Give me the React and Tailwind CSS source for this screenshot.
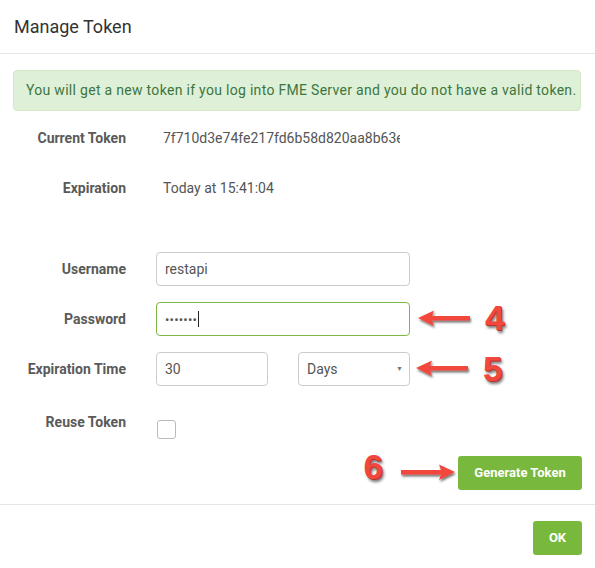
import React from "react";

function LeftArrow() {
  return (
    <svg width="58" height="22" viewBox="0 0 58 22" className="overflow-visible">
      <defs>
        <filter id="sh" x="-20%" y="-40%" width="140%" height="180%">
          <feDropShadow dx="1" dy="2" stdDeviation="1" floodColor="#000" floodOpacity="0.55" />
        </filter>
      </defs>
      <path d="M1 10 L17 2.5 L15 8 L53 8 L53 12.5 L15 12.5 L17 18 Z" fill="#f2473c" filter="url(#sh)" />
    </svg>
  );
}

function RightArrow() {
  return (
    <svg width="58" height="22" viewBox="0 0 58 22" className="overflow-visible">
      <defs>
        <filter id="sh2" x="-20%" y="-40%" width="140%" height="180%">
          <feDropShadow dx="1" dy="2" stdDeviation="1" floodColor="#000" floodOpacity="0.55" />
        </filter>
      </defs>
      <path d="M56 10 L40 2.5 L42 8 L2 8 L2 12.5 L42 12.5 L40 18 Z" fill="#f2473c" filter="url(#sh2)" />
    </svg>
  );
}

function Num({ children }) {
  return (
    <span className="font-black text-[35px] leading-none text-[#f2473c] [font-family:'Liberation_Sans',Arial,sans-serif] [text-shadow:1px_1px_0_#b8322b,2px_3px_3px_rgba(0,0,0,0.55)]">
      {children}
    </span>
  );
}

function Label({ children }) {
  return (
    <div className="w-[126px] shrink-0 text-right text-[14px] leading-[20px] font-bold text-[#5a5a5a]">{children}</div>
  );
}

export default function App() {
  return (
    <div className="w-[595px] h-[568px] bg-white overflow-hidden [font-family:Roboto,'Liberation_Sans',sans-serif]">
      <div className="h-[54px] border-b border-[#e5e5e5] px-[14px] flex items-center">
        <h4 className="text-[18px] text-[#333] font-normal">Manage Token</h4>
      </div>

      <div className="pt-[16px] pb-[14px] border-b border-[#e5e5e5]">
        <div className="ml-[13px] mr-[14px] h-[41px] rounded-[4px] bg-[#dff0d8] border border-[#d6e9c6] px-[12px] flex items-center text-[14px] tracking-[0.3px] whitespace-nowrap text-[#3c763d]">
          You will get a new token if you log into FME Server and you do not have a valid token.
        </div>

        <div className="mt-[10px] h-[34px] flex items-center">
          <Label>Current Token</Label>
          <div className="ml-[37px] w-[237px] overflow-hidden whitespace-nowrap text-[14px] text-[#555]">
            7f710d3e74fe217fd6b58d820aa8b63e
          </div>
        </div>

        <div className="mt-[16px] h-[34px] flex items-center">
          <Label>Expiration</Label>
          <div className="ml-[37px] text-[14px] text-[#555]">Today at 15:41:04</div>
        </div>

        <div className="mt-[47px] h-[34px] flex items-center">
          <Label>Username</Label>
          <div className="ml-[30px] w-[254px] h-[34px] rounded-[4px] border border-[#ccc] px-[8px] flex items-center text-[14px] text-[#555]">
            restapi
          </div>
        </div>

        <div className="mt-[16px] h-[34px] flex items-center">
          <Label>Password</Label>
          <div className="ml-[30px] w-[254px] h-[34px] rounded-[4px] border border-[#7db744] px-[8px] flex items-center text-[#555]">
            <span className="text-[13px] tracking-[0.2px] leading-none">•••••••</span>
            <span className="ml-[1px] w-[1px] h-[16px] bg-[#222]"></span>
          </div>
          <div className="ml-[7px] flex items-center">
            <LeftArrow />
            <span className="ml-[10px] -mt-[2px]"><Num>4</Num></span>
          </div>
        </div>

        <div className="mt-[16px] h-[34px] flex items-center">
          <Label>Expiration Time</Label>
          <div className="ml-[30px] w-[112px] h-[34px] rounded-[4px] border border-[#ccc] px-[8px] flex items-center text-[14px] text-[#555]">
            30
          </div>
          <div className="ml-[30px] w-[112px] h-[34px] rounded-[4px] border border-[#ccc] pl-[8px] pr-[6px] flex items-center justify-between text-[14px] text-[#555]">
            <span>Days</span>
            <span className="text-[7px] text-[#777]">▼</span>
          </div>
          <div className="ml-[5px] flex items-center">
            <LeftArrow />
            <span className="ml-[10px]"><Num>5</Num></span>
          </div>
        </div>

        <div className="mt-[16px] h-[54px] flex items-start">
          <div className="pt-[10px]">
            <Label>Reuse Token</Label>
          </div>
          <div className="ml-[31px] mt-[18px] w-[19px] h-[19px] rounded-[3px] border border-[#bbb] bg-white"></div>
        </div>

        <div className="flex items-center justify-end pr-[13px]">
          <span className="-mt-[12px]"><Num>6</Num></span>
          <span className="ml-[16px]"><RightArrow /></span>
          <button className="ml-[1px] w-[124px] h-[34px] rounded-[3px] bg-[#78b83c] text-white text-[13px] font-bold">
            Generate Token
          </button>
        </div>
      </div>

      <div className="pt-[16px] pr-[13px] flex justify-end">
        <button className="w-[49px] h-[34px] rounded-[3px] bg-[#78b83c] text-white text-[13px] font-bold">OK</button>
      </div>
    </div>
  );
}
